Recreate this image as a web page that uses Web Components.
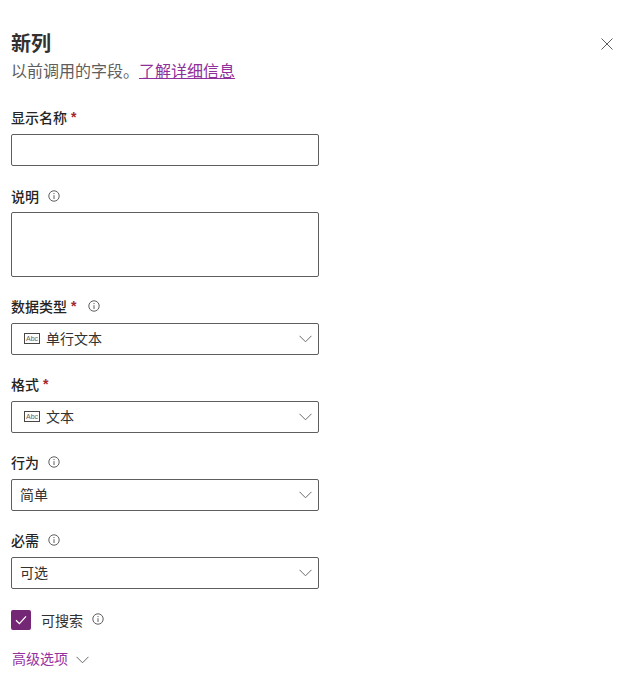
<!DOCTYPE html>
<html lang="zh">
<head>
<meta charset="utf-8">
<title>新列</title>
<style>
html, body { margin: 0; background: #fff; }
body { font-family: "Liberation Sans", "Noto Sans CJK SC", sans-serif; color: #323130; }
</style>
</head>
<body>
<new-column-panel></new-column-panel>
<script>
var infoIcon = `<svg width="12" height="12" viewBox="0 0 12 12" fill="none" stroke="#605e5c" stroke-width="1"><circle cx="6" cy="6" r="5.2"/><path d="M6 5.2V9"/><path d="M6 3v1.1"/></svg>`
var chevron = `<svg width="13" height="8" viewBox="0 0 13 8" fill="none" stroke="#6b6967" stroke-width="1"><path d="M.5.8 6.500 6.800l6-6"/></svg>`
var abcIcon = `<svg width="16" height="11" viewBox="0 0 16 11"><rect x=".5" y=".5" width="15" height="10" fill="none" stroke="#484644"/><text x="8" y="8" font-size="7" text-anchor="middle" font-family="Liberation Sans, sans-serif" fill="#605e5c">Abc</text></svg>`

class FieldLabel extends HTMLElement {
	connectedCallback() {
		var shadow = this.attachShadow({mode:'open'})
		var req = this.hasAttribute('required')
		var star = req ? '<span class="star">*</span>' : ''
		var info = this.hasAttribute('info') ? `<span class="info${req ? ' after-star' : ''}">${infoIcon}</span>` : ''
		shadow.innerHTML = `<style>
:host { display: flex; align-items: center; box-sizing: border-box; height: 20px; padding-bottom: 2px; font-size: 14px; font-weight: 500; color: #252423; }
.star { color: #a4262c; font-weight: 700; margin-left: 4px; }
.info { display: flex; margin-left: 9px; }
.info.after-star { margin-left: 12px; }
</style><slot></slot>${star}${info}`
	}
}
customElements.define('field-label', FieldLabel)

class TextField extends HTMLElement {
	connectedCallback() {
		var shadow = this.attachShadow({mode:'open'})
		shadow.innerHTML = `<style>
:host { display: block; box-sizing: border-box; width: 308px; height: 32px; border: 1px solid #605e5c; border-radius: 2px; background: #fff; }
:host([multiline]) { height: 65px; }
</style><slot></slot>`
	}
}
customElements.define('text-field', TextField)

class DropSelect extends HTMLElement {
	connectedCallback() {
		var shadow = this.attachShadow({mode:'open'})
		var icon = this.hasAttribute('abc') ? `<span class="abc">${abcIcon}</span>` : ''
		shadow.innerHTML = `<style>
:host { display: flex; align-items: center; box-sizing: border-box; width: 308px; height: 32px; border: 1px solid #605e5c; border-radius: 2px; padding: 0 6px 0 8px; font-size: 14px; font-weight: 400; color: #323130; }
:host([abc]) { padding-left: 12px; }
.abc { display: flex; margin-right: 6px; margin-top: -2px; }
.txt { flex: 1; margin-bottom: 2px; }
.chev { display: flex; }
</style>${icon}<span class="txt"><slot></slot></span><span class="chev">${chevron}</span>`
	}
}
customElements.define('drop-select', DropSelect)

class FormField extends HTMLElement {
	connectedCallback() {
		var shadow = this.attachShadow({mode:'open'})
		shadow.innerHTML = `<style>
:host { display: flex; flex-direction: column; gap: 6px; margin-top: 20px; }
:host([tight]) { gap: 5px; margin-top: 21px; }
</style><slot></slot>`
	}
}
customElements.define('form-field', FormField)

class CheckRow extends HTMLElement {
	connectedCallback() {
		var shadow = this.attachShadow({mode:'open'})
		shadow.innerHTML = `<style>
:host { display: flex; align-items: center; height: 20px; margin-top: 21px; font-size: 14px; color: #323130; }
.box { width: 20px; height: 20px; box-sizing: border-box; border-radius: 2px; background: #742774; display: flex; align-items: center; justify-content: center; margin-right: 10px; }
.info { display: flex; margin-left: 9px; margin-top: -2px; }
</style><span class="box"><svg width="12" height="10" viewBox="0 0 12 10" fill="none" stroke="#fff" stroke-width="1.3"><path d="M1 5.2 4.4 8.6 11 1.4"/></svg></span><slot></slot><span class="info">${infoIcon}</span>`
	}
}
customElements.define('check-row', CheckRow)

class AdvancedToggle extends HTMLElement {
	connectedCallback() {
		var shadow = this.attachShadow({mode:'open'})
		shadow.innerHTML = `<style>
:host { display: flex; align-items: center; box-sizing: border-box; height: 20px; margin-top: 19px; padding: 0 0 2px 1px; font-size: 14px; color: #96309f; }
.chev { display: flex; margin-left: 8px; margin-top: 3px; }
</style><slot></slot><span class="chev">${chevron}</span>`
	}
}
customElements.define('advanced-toggle', AdvancedToggle)

class NewColumnPanel extends HTMLElement {
	connectedCallback() {
		var shadow = this.attachShadow({mode:'open'})
		shadow.innerHTML = `<style>
:host { display: block; box-sizing: border-box; width: 639px; height: 697px; padding: 30px 0 0 11px; font-family: "Liberation Sans", "Noto Sans CJK SC", sans-serif; overflow: hidden; position: relative; }
h1 { margin: 0; font-size: 20px; line-height: 28px; font-weight: 700; color: #323130; }
p { margin: 0; font-size: 16px; line-height: 28px; color: #605e5c; }
a { color: #8f2f9b; text-decoration: underline; }
.close { position: absolute; top: 38px; left: 601px; display: flex; }
.fields { margin-top: 22px; }
</style>
<h1>新列</h1>
<p>以前调用的字段。<a href="#">了解详细信息</a></p>
<span class="close"><svg width="12" height="12" viewBox="0 0 12 12" fill="none" stroke="#605e5c" stroke-width="1"><path d="M.5.5l11 11M11.500.5l-11 11"/></svg></span>
<div class="fields">
	<form-field><field-label required>显示名称</field-label><text-field></text-field></form-field>
	<form-field tight><field-label info>说明</field-label><text-field multiline></text-field></form-field>
	<form-field><field-label required info>数据类型</field-label><drop-select abc>单行文本</drop-select></form-field>
	<form-field><field-label required>格式</field-label><drop-select abc>文本</drop-select></form-field>
	<form-field><field-label info>行为</field-label><drop-select>简单</drop-select></form-field>
	<form-field><field-label info>必需</field-label><drop-select>可选</drop-select></form-field>
	<check-row>可搜索</check-row>
	<advanced-toggle>高级选项</advanced-toggle>
</div>`
	}
}
customElements.define('new-column-panel', NewColumnPanel)
</script>
</body>
</html>
